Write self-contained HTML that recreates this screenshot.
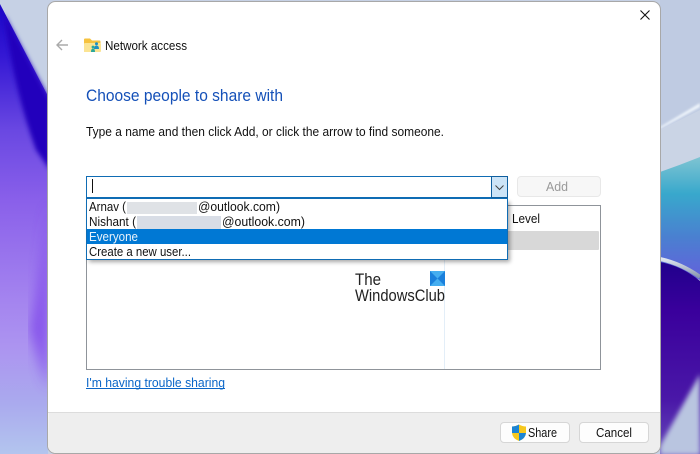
<!DOCTYPE html>
<html><head><meta charset="utf-8"><style>
html,body{margin:0;padding:0;width:700px;height:454px;overflow:hidden;background:#c5d0e4}
svg{display:block}
text{font-family:"Liberation Sans",sans-serif;font-size:13px;fill:#111}
</style></head><body>
<svg width="700" height="454" viewBox="0 0 700 454" xmlns="http://www.w3.org/2000/svg">
<defs>
<linearGradient id="lp" x1="0" y1="0" x2="0" y2="1">
<stop offset="0" stop-color="#1400c4"/><stop offset=".14" stop-color="#3418d4"/><stop offset=".3" stop-color="#6a48e2"/><stop offset=".45" stop-color="#8a60ea"/><stop offset=".66" stop-color="#a484ef"/><stop offset=".76" stop-color="#ac94f0"/><stop offset=".88" stop-color="#aaaaee"/><stop offset="1" stop-color="#b4c8ee"/>
</linearGradient>
<linearGradient id="rt" x1="0" y1="0" x2="0" y2="1">
<stop offset="0" stop-color="#7fc4d2"/><stop offset=".3" stop-color="#38a8cc"/><stop offset=".65" stop-color="#4a80d0"/><stop offset="1" stop-color="#6460dc"/>
</linearGradient>
<linearGradient id="rd" x1="0" y1="0" x2="0" y2="1">
<stop offset="0" stop-color="#20008c"/><stop offset=".25" stop-color="#3a009c"/><stop offset=".7" stop-color="#4a18a8"/><stop offset="1" stop-color="#6a50bc"/>
</linearGradient>
<linearGradient id="sh" x1="0" y1="0" x2="0" y2="1">
<stop offset="0" stop-color="#dfe6f0"/><stop offset="1" stop-color="#8a97ad"/>
</linearGradient>
<filter id="b2"><feGaussianBlur stdDeviation="2"/></filter>
<filter id="b1"><feGaussianBlur stdDeviation="1"/></filter>
<filter id="b6"><feGaussianBlur stdDeviation="6"/></filter>
<filter id="b3"><feGaussianBlur stdDeviation="2.5"/></filter>
<clipPath id="l"><rect x="0" y="0" width="48" height="454"/></clipPath>
<clipPath id="r"><rect x="660" y="0" width="40" height="454"/></clipPath>
</defs>

<rect width="700" height="454" fill="#c6d1e5"/>

<!-- left wallpaper -->
<g clip-path="url(#l)">
<path d="M-10 -10L0 4L50 100V460H-10Z" fill="url(#lp)"/>
<path d="M4 14L50 100V170L36 150Q14 90 4 14Z" fill="#2200bc" filter="url(#b3)"/>
<path d="M48 200L48 390L30 330Q44 260 48 200Z" fill="#7a40ea" opacity=".75" filter="url(#b6)"/>
</g>

<!-- right wallpaper -->
<g clip-path="url(#r)">
<rect x="660" y="0" width="40" height="454" fill="#bfcbe2"/>
<path d="M660 127L700 103V107L660 129Z" fill="#eef4fb" filter="url(#b1)"/>
<path d="M660 130L700 110V170L660 172Z" fill="#cdd6e6" opacity=".8"/>
<path d="M660 172Q680 165 700 157V280L660 262Z" fill="url(#rt)"/>
<path d="M660 262Q682 266 700 281V460H660Z" fill="url(#rd)"/>
<path d="M660 259Q682 264 700 277" fill="none" stroke="url(#sh)" stroke-width="4"/>
<path d="M660 455L660 446L700 374V455Z" fill="#b9c5e0" filter="url(#b3)"/>
</g>

<!-- window -->
<rect x="47.500" y="1.500" width="613" height="452" rx="8" fill="#fff" stroke="#a8a8a8"/>
<path d="M48.500 412.500H660V445a8 8 0 0 1-8 8H56a8 8 0 0 1-8-8Z" fill="#eeeeee"/>
<path d="M48 412.500H660" stroke="#dcdcdc"/>

<!-- close -->
<path d="M640.500 10.500L649.500 19.500M649.500 10.500L640.500 19.500" stroke="#111" stroke-width="1.100" fill="none"/>

<!-- back arrow -->
<path d="M68 45H57M62 40L57 45L62 50" stroke="#aaa" stroke-width="1.400" fill="none"/>

<!-- folder icon -->
<path d="M84 39.500a1 1 0 0 1 1-1h5l2 2h7.500a1 1 0 0 1 1 1V51a1 1 0 0 1-1 1H85a1 1 0 0 1-1-1Z" fill="#f6c23e"/>
<rect x="84" y="43" width="17" height="9" rx="1" fill="#fbe493"/>
<circle cx="96.500" cy="43.700" r="1.500" fill="#1d8fc4"/>
<path d="M94 49q0-3.500 2.500-3.500t2.500 3.500Z" fill="#1d8fc4"/>
<circle cx="93" cy="47" r="1.400" fill="#2aa79b"/>
<path d="M91 52q0-3.500 2-3.500t2 3.500Z" fill="#2aa79b"/>

<text x="105" y="50" textLength="82" lengthAdjust="spacingAndGlyphs">Network access</text>
<text x="86" y="101" textLength="197" lengthAdjust="spacingAndGlyphs" style="font-size:17px;fill:#1450b8">Choose people to share with</text>
<text x="86" y="136" textLength="358" lengthAdjust="spacingAndGlyphs">Type a name and then click Add, or click the arrow to find someone.</text>

<!-- list view -->
<rect x="86.500" y="205.500" width="514" height="164" fill="#fff" stroke="#8f949a"/>
<rect x="500" y="231" width="99" height="19" rx="1" fill="#d8d8d8"/>
<path d="M444.500 260V369" stroke="#e3eef8"/>
<text x="512" y="223" textLength="28" lengthAdjust="spacingAndGlyphs">Level</text>

<!-- watermark -->
<text x="355" y="285" textLength="26" lengthAdjust="spacingAndGlyphs" style="font-size:17px;fill:#222">The</text>
<text x="355" y="301" textLength="90" lengthAdjust="spacingAndGlyphs" style="font-size:17px;fill:#222">WindowsClub</text>
<rect x="430" y="271" width="15" height="15" fill="#1a80dc"/>
<path d="M430 271H445L437.500 278.500Z" fill="#45aef0"/>
<path d="M430 286H445L437.500 278.500Z" fill="#45aef0"/>

<!-- combobox -->
<rect x="86.500" y="176.500" width="421" height="21" fill="#fff" stroke="#0f6cb4"/>
<rect x="491.500" y="176.500" width="16" height="21" fill="#cce4f7" stroke="#0f5f9f"/>
<path d="M495.500 185.500L499.500 189.500L503.500 185.500" fill="none" stroke="#444" stroke-width="1"/>
<path d="M92.500 179V193" stroke="#111" stroke-width="1"/>

<!-- add button -->
<rect x="517.500" y="176.500" width="83" height="20" rx="3.500" fill="#f7f7f7" stroke="#e8e8e8"/>
<text x="546" y="191" textLength="22" lengthAdjust="spacingAndGlyphs" style="fill:#9a9a9a">Add</text>

<!-- dropdown -->
<rect x="89" y="202" width="421" height="60" fill="#000" opacity=".35" filter="url(#b2)"/>
<rect x="86.500" y="198.500" width="421" height="61" fill="#fff" stroke="#0f6cb4"/>
<rect x="87" y="229" width="420" height="15" fill="#0078d4"/>
<text x="89" y="211" textLength="37" lengthAdjust="spacingAndGlyphs">Arnav (</text>
<rect x="127" y="202" width="70" height="12" fill="#dfe2e6"/>
<text x="198" y="211" textLength="82" lengthAdjust="spacingAndGlyphs">@outlook.com)</text>
<text x="89" y="226" textLength="47" lengthAdjust="spacingAndGlyphs">Nishant (</text>
<rect x="137" y="216" width="84" height="13" fill="#d8dde6"/>
<text x="222" y="226" textLength="83" lengthAdjust="spacingAndGlyphs">@outlook.com)</text>
<text x="89" y="241" textLength="49" lengthAdjust="spacingAndGlyphs" style="fill:#e8f2fb">Everyone</text>
<text x="89" y="256" textLength="102" lengthAdjust="spacingAndGlyphs">Create a new user...</text>

<!-- link -->
<text x="86" y="387" textLength="139" lengthAdjust="spacingAndGlyphs" style="fill:#0a66c8">I'm having trouble sharing</text>
<path d="M86 388.500H225" stroke="#0a66c8"/>

<!-- footer buttons -->
<rect x="500.500" y="422.500" width="69" height="20" rx="3.500" fill="#fdfdfd" stroke="#d6d6d6"/>
<rect x="579.500" y="422.500" width="69" height="20" rx="3.500" fill="#fdfdfd" stroke="#d6d6d6"/>
<path d="M519 424.500Q515.500 426.500 512 426.500V433Q512.500 438.500 519 441Q525.500 438.500 526 433V426.500Q522.500 426.500 519 424.500Z" fill="#f6c81e"/>
<path d="M519 424.500Q515.500 426.500 512 426.500V433H519Z" fill="#1b84d4"/>
<path d="M519 433H526Q525.500 438.500 519 441Z" fill="#1b84d4"/>
<text x="528" y="437" textLength="29" lengthAdjust="spacingAndGlyphs">Share</text>
<text x="596" y="437" textLength="36" lengthAdjust="spacingAndGlyphs">Cancel</text>
</svg>
</body></html>
